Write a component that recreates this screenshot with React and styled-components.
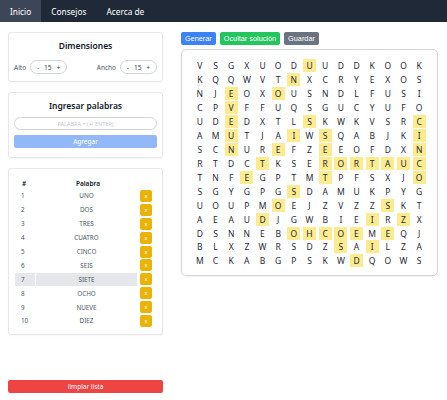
import React from "react";
import styled, { createGlobalStyle } from "styled-components";

const GlobalStyle = createGlobalStyle`
  body {
    margin: 0;
    font-family: "Noto Sans", "Open Sans", sans-serif;
    background: #fff;
    color: #1f2937;
  }
`;

// Navbar
const Nav = styled.nav`
  display: flex;
  height: 22px;
  background: #1f2937;
`;

const NavItem = styled.a`
  display: flex;
  align-items: center;
  padding: 0 10px;
  font-size: 8.3px;
  color: #fff;
  text-decoration: none;
  background: ${(p) => (p.active ? "#3c4656" : "transparent")};
`;

// Layout
const Page = styled.div`
  display: flex;
  gap: 18px;
  padding: 10px 9px 0 8px;
`;

const Left = styled.div`
  width: 155px;
  display: flex;
  flex-direction: column;
  gap: 10px;
`;

const Right = styled.div`
  flex: 1;
  display: flex;
  flex-direction: column;
  gap: 4px;
`;

const Card = styled.div`
  border: 1px solid #e5e7eb;
  border-radius: 3px;
  box-shadow: 0 1px 2px rgba(0, 0, 0, 0.04);
  padding: ${(p) => p.pad || "8px 5px"};
`;

const Title = styled.div`
  text-align: center;
  font-size: 8.5px;
  line-height: 12px;
  font-weight: 600;
  color: #111827;
  margin-bottom: ${(p) => p.mb || "8px"};
`;

// Dimensiones
const DimRow = styled.div`
  display: flex;
  justify-content: space-between;
  align-items: center;
`;

const DimGroup = styled.div`
  display: flex;
  align-items: center;
  gap: 4px;
  font-size: 6.5px;
  color: #4b5563;
`;

const Stepper = styled.div`
  display: flex;
  align-items: center;
  justify-content: space-between;
  width: 37px;
  height: 14px;
  box-sizing: border-box;
  padding: 0 6px;
  border: 1px solid #d1d5db;
  border-radius: 8px;
  font-size: 6.5px;
  color: #374151;
`;

// Ingresar palabras
const Input = styled.input`
  display: block;
  width: 100%;
  height: 13px;
  box-sizing: border-box;
  padding: 0;
  margin: 0;
  border: 1px solid #d1d5db;
  border-radius: 7px;
  font-family: inherit;
  font-size: 5.5px;
  text-align: center;
  outline: none;
  &::placeholder {
    color: #c4c8cf;
  }
`;

const WideButton = styled.button`
  display: block;
  width: 100%;
  height: 13px;
  margin: ${(p) => p.mt || "5px"} 0 0;
  border: none;
  border-radius: 2px;
  background: ${(p) => p.bg};
  color: #fff;
  font-family: inherit;
  font-size: 6.5px;
  line-height: 13px;
  padding: 0;
`;

// Tabla
const Table = styled.div`
  display: grid;
  grid-template-columns: 21px 1fr 16px;
  grid-template-rows: 12px;
  grid-auto-rows: 13.9px;
  align-items: center;
  font-size: 6.3px;
  color: #4b5563;
`;

const Head = styled.div`
  font-weight: 600;
  color: #111827;
  font-size: 6.5px;
  text-align: ${(p) => (p.center ? "center" : "left")};
  padding-left: ${(p) => (p.center ? "0" : "7px")};
`;

const Cell = styled.div`
  height: 12.5px;
  display: flex;
  align-items: center;
  justify-content: ${(p) => (p.center ? "center" : "flex-start")};
  padding-left: ${(p) => (p.center ? "0" : "6px")};
  background: ${(p) => (p.sel ? "#e5e7eb" : "transparent")};
  margin-right: ${(p) => (p.gap ? "3px" : "1px")};
`;

const XButton = styled.button`
  width: 12px;
  height: 12px;
  padding: 0;
  border: none;
  border-radius: 2px;
  background: #eab308;
  color: #fff;
  font-family: inherit;
  font-size: 5.5px;
  justify-self: start;
`;

// Botones superiores
const Toolbar = styled.div`
  display: flex;
  gap: 4px;
`;

const Btn = styled.button`
  height: 13px;
  padding: 0 4px;
  border: none;
  border-radius: 2px;
  background: ${(p) => p.bg};
  color: #fff;
  font-family: "Liberation Sans", Arial, sans-serif;
  font-size: 7.3px;
`;

// Sopa de letras
const Board = styled.div`
  border: 1px solid #d1d5db;
  border-radius: 5px;
  padding: 9px 10px 7px;
  display: grid;
  grid-template-columns: repeat(15, 1fr);
  grid-auto-rows: 13.93px;
  box-shadow: 0 1px 2px rgba(0, 0, 0, 0.06);
`;

const Letter = styled.div`
  display: flex;
  align-items: center;
  justify-content: center;
  span {
    display: flex;
    align-items: center;
    justify-content: center;
    width: 13px;
    height: 13px;
    font-size: 8.5px;
    color: #1f2937;
    background: ${(p) => (p.hl ? "#fdeb8f" : "transparent")};
  }
`;

const GRID = [
  "VSGXUODUUDDKOOK",
  "KQQWVTNXCRYEXOS",
  "NJEOXOUSNDLFUSI",
  "CPVFFUQSGUCYUFO",
  "UDEDXTLSKWKVSRC",
  "AMUTJAIWSQABJKI",
  "SCNUREFZEEOFDXN",
  "RTDCTKSERORTAUC",
  "TNFEGPTMTPFSXJO",
  "SGYGPGSDAMUKPYG",
  "UOUPMOEJZVZZSKT",
  "AEAUDJGWBIEIRZX",
  "DSNNEBOHCOEMEQJ",
  "BLXZWRSDZSAILZA",
  "MCKABGPSKWDQOWS",
];

const HL = [
  [8],
  [7],
  [3, 6],
  [3],
  [3, 8, 15],
  [3, 7, 9, 15],
  [3, 6, 9, 15],
  [5, 9, 10, 11, 12, 13, 14, 15],
  [4, 9, 15],
  [7],
  [6, 13],
  [5, 12, 14],
  [7, 8, 9, 10, 11, 13],
  [10, 12],
  [11],
];

const WORDS = ["UNO", "DOS", "TRES", "CUATRO", "CINCO", "SEIS", "SIETE", "OCHO", "NUEVE", "DIEZ"];

export default function App() {
  return (
    <>
      <GlobalStyle />
      <Nav>
        <NavItem active>Inicio</NavItem>
        <NavItem>Consejos</NavItem>
        <NavItem>Acerca de</NavItem>
      </Nav>
      <Page>
        <Left>
          <Card pad="7px 5px 7px">
            <Title mb="8px">Dimensiones</Title>
            <DimRow>
              <DimGroup>
                Alto
                <Stepper>
                  <span>-</span>
                  <span>15</span>
                  <span>+</span>
                </Stepper>
              </DimGroup>
              <DimGroup>
                Ancho
                <Stepper>
                  <span>-</span>
                  <span>15</span>
                  <span>+</span>
                </Stepper>
              </DimGroup>
            </DimRow>
          </Card>
          <Card pad="7px 5px 9px">
            <Title mb="5px">Ingresar palabras</Title>
            <Input placeholder="PALABRA + (↵ ENTER)" />
            <WideButton bg="#93b8f7">Agregar</WideButton>
          </Card>
          <Card pad="8px 6px 6px">
            <Table>
              <Head>#</Head>
              <Head center>Palabra</Head>
              <span />
              {WORDS.map((w, i) => (
                <React.Fragment key={w}>
                  <Cell sel={i === 6}>{i + 1}</Cell>
                  <Cell center sel={i === 6} gap>
                    {w}
                  </Cell>
                  <XButton>x</XButton>
                </React.Fragment>
              ))}
            </Table>
          </Card>
          <WideButton bg="#ef4444" mt="35px">
            limpiar lista
          </WideButton>
        </Left>
        <Right>
          <Toolbar>
            <Btn bg="#3b82f6">Generar</Btn>
            <Btn bg="#22c55e">Ocultar solución</Btn>
            <Btn bg="#6b7280">Guardar</Btn>
          </Toolbar>
          <Board>
            {GRID.map((row, r) =>
              row.split("").map((ch, c) => (
                <Letter key={r + "-" + c} hl={HL[r].includes(c + 1)}>
                  <span>{ch}</span>
                </Letter>
              ))
            )}
          </Board>
        </Right>
      </Page>
    </>
  );
}
